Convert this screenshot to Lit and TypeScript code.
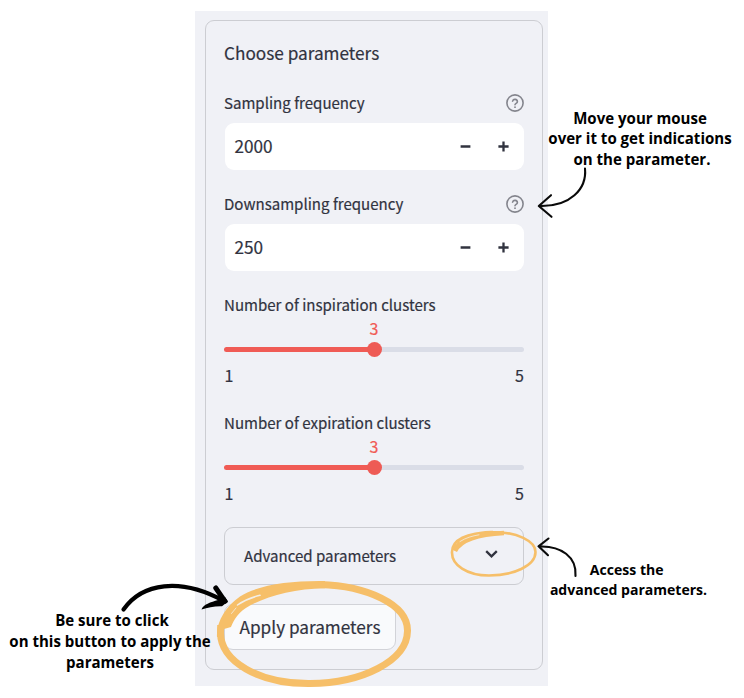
import { LitElement, html, css, svg } from "lit";
import { customElement, property } from "lit/decorators.js";

const uiFont = css`"Noto Sans CJK SC", "Noto Sans CJK JP", sans-serif`;

@customElement("number-field")
class NumberField extends LitElement {
  @property() label = "";
  @property() value = "";

  static styles = css`
    :host { display: block; font-family: ${uiFont}; color: #31333f; -webkit-text-stroke: .2px #31333f; }
    .head { display: flex; align-items: center; justify-content: space-between; height: 20px; }
    .label { font-size: 15.05px; line-height: 20px; white-space: nowrap; }
    .help { display: block; width: 18px; height: 18px; }
    .box {
      display: flex; align-items: center; height: 46.500px; margin: 10px .5px 0;
      background: #fff; border-radius: 9px; padding: 0 14.500px 0 10px; box-sizing: border-box;
    }
    .value { flex: 1; font-size: 17.2px; line-height: 24px; padding-bottom: 1px; }
    .step { display: block; width: 11px; height: 11px; margin-left: 27px; }
  `;

  render() {
    return html`
      <div class="head">
        <span class="label">${this.label}</span>
        <svg class="help" viewBox="0 0 18 18" fill="none" stroke="#84858d" stroke-width="1.6" stroke-linecap="round">
          <circle cx="9" cy="9" r="8.1"></circle>
          <path d="M6.600 7.100a2.450 2.450 0 0 1 4.800 .6c0 1.600-2.300 1.700-2.400 3"></path>
          <path d="M9 13.200h.01" stroke-width="1.800"></path>
        </svg>
      </div>
      <div class="box">
        <span class="value">${this.value}</span>
        <svg class="step" viewBox="0 0 11 11" stroke="#31333f" stroke-width="2.500"><path d="M.6 5.500h9.800"></path></svg>
        <svg class="step" viewBox="0 0 11 11" stroke="#31333f" stroke-width="2.300"><path d="M.4 5.500h10.200M5.500 .4v10.200"></path></svg>
      </div>
    `;
  }
}

@customElement("range-slider")
class RangeSlider extends LitElement {
  @property() label = "";
  @property({ type: Number }) min = 1;
  @property({ type: Number }) max = 5;
  @property({ type: Number }) value = 3;

  static styles = css`
    :host { display: block; font-family: ${uiFont}; color: #31333f; -webkit-text-stroke: .2px; }
    .label { font-size: 15.05px; line-height: 19px; height: 20px; white-space: nowrap; }
    .value { height: 18px; margin-top: 5px; line-height: 17px; font-size: 16px; text-align: center; color: #f05b55; }
    .track { display: flex; align-items: center; height: 18px; margin-top: 3px; }
    .done { height: 5px; border-radius: 3px 0 0 3px; background: #f05b55; }
    .thumb { width: 15px; height: 15px; margin: 0 -7.5px; border-radius: 50%; background: #ee5b55; z-index: 1; }
    .rest { flex: 1; height: 5px; border-radius: 0 3px 3px 0; background: #dadde7; }
    .ends { display: flex; justify-content: space-between; height: 21px; margin-top: 7px; line-height: 18px; padding-left: .5px; font-size: 16px; }
  `;

  render() {
    const part = ((this.value - this.min) / (this.max - this.min)) * 100;
    return html`
      <div class="label">${this.label}</div>
      <div class="value">${this.value}</div>
      <div class="track">
        <div class="done" style="width:${part}%"></div>
        <div class="thumb"></div>
        <div class="rest"></div>
      </div>
      <div class="ends"><span>${this.min}</span><span>${this.max}</span></div>
    `;
  }
}

const marks = svg`
  <g fill="none" stroke="#0a0a0a" stroke-linecap="round" stroke-linejoin="round">
    <path stroke-width="2.1" d="M585 168.500C587 189 570 207 539.500 206M551 195.200L538.800 206L551.500 216.800"></path>
    <path stroke-width="2.1" d="M575.500 576C577 557 561 545.500 539 546.500M548.500 538.500L538.500 546.300L548 555.200"></path>
    <path stroke="#000" stroke-width="4.200" d="M123.500 609.500C142 583 180 577 224 601"></path>
    <path stroke="#000" stroke-width="5" d="M215.800 588L225 601.300"></path>
  </g>
  <path d="M228 601.500L222 606.200C214 606 208 607.500 201.500 609.500C203 604.500 211 602 218 600L225 597Z"></path>
  <g fill="none" stroke="#f6bf69" stroke-linecap="butt">
    <path stroke-width="7" d="M320 584.600C366 586 408 604 407.500 631C407 661 362 683 310 683.500C258 684 221 661 220.500 633L220.700 625"></path>
    <path stroke-width="2.600" d="M454 550C460 537 478 531.500 493 532C517 532 535.500 541 535.500 552C535.500 566 513 575.500 489 575.500C467 575.500 451.500 565 452 552C452 540 466 532.500 493 532"></path>
    <path stroke-width="4.500" d="M455 551C460 541 474 534.500 504 533"></path>
  </g>
  <path fill="#f6bf69" d="M217 637C216 622 226 606 240 596.500C258 585 290 580.500 325 581.100V588.200C295 588.500 268 596 250 605.500C238 612 234 620 231 627L224 629V637Z"></path>
  <g fill="none" stroke="#f3eee6" stroke-linecap="round">
    <path stroke-width="1.500" d="M237.500 605C244 600.500 251 597.500 260 595.300"></path>
    <path stroke-width=".8" d="M231.500 613.500L236 608"></path>
    <path stroke-width=".8" d="M460 541.500C466 537.700 472 536 479 534.800"></path>
  </g>
`;

@customElement("app-root")
class AppRoot extends LitElement {
  static styles = css`
    :host {
      display: block; position: relative; box-sizing: border-box; width: 744px; height: 698px;
      padding: 11px 0 0 195px; background: #fff; overflow: hidden;
      font-family: ${uiFont}; color: #31333f;
    }
    .panel {
      box-sizing: border-box; width: 353px; height: 675px; padding: 9px 5px 0 10px; background: #f0f1f6;
      -webkit-text-stroke: .2px #31333f;
    }
    .card {
      box-sizing: border-box; height: 650px; padding: 20px 18px 0;
      border: 1px solid #cccdd2; border-radius: 9px;
    }
    .title { height: 26px; margin-bottom: 26px; font-size: 17.2px; line-height: 24px; white-space: nowrap; }
    .gap { margin-top: 24.500px; }
    .gap-a { margin-top: 24px; }
    .gap-b { margin-top: 26px; }
    .expander {
      box-sizing: border-box; display: flex; align-items: center; justify-content: space-between;
      height: 58px; margin-top: 22px; padding: 0 25px 0 19px;
      border: 1px solid #cccdd2; border-radius: 9px; font-size: 15.05px;
    }
    .chevron { display: block; width: 13px; height: 8px; margin-top: -4px; }
    .apply {
      box-sizing: border-box; display: block; width: 172px; height: 46px; margin-top: 19px; padding: 0;
      border: 1px solid #d2d3d8; border-radius: 9px; background: #f9fafc;
      font: inherit; color: inherit; font-size: 17.2px; line-height: 43px; white-space: nowrap;
    }
    .marks { position: absolute; left: 0; top: 0; width: 744px; height: 698px; }
    .note {
      position: absolute; color: #000; font-family: "Open Sans", "Noto Sans", sans-serif;
      font-weight: 700; text-align: center; white-space: nowrap;
    }
    .hover { left: 540px; top: 107.500px; width: 200px; font-size: 15.05px; line-height: 20.700px; }
    .access { left: 528.500px; top: 560px; width: 200px; font-size: 14.05px; line-height: 19.500px; }
    .click { left: 0; top: 610px; width: 220px; font-size: 15.05px; line-height: 21px; }
  `;

  render() {
    return html`
      <div class="panel">
        <div class="card">
          <div class="title">Choose parameters</div>
          <number-field label="Sampling frequency" value="2000"></number-field>
          <number-field class="gap" label="Downsampling frequency" value="250"></number-field>
          <range-slider class="gap-a" label="Number of inspiration clusters"></range-slider>
          <range-slider class="gap-b" label="Number of expiration clusters"></range-slider>
          <div class="expander">
            <span>Advanced parameters</span>
            <svg class="chevron" viewBox="0 0 13 8" fill="none" stroke="#31333f" stroke-width="2.300"><path d="M1.200 1.200L6.500 6.300L11.800 1.200"></path></svg>
          </div>
          <button class="apply">Apply parameters</button>
        </div>
      </div>
      <svg class="marks" viewBox="0 0 744 698">${marks}</svg>
      <div class="note hover">Move your mouse<br>over it to get indications<br>&nbsp;on the parameter.</div>
      <div class="note access">Access the&nbsp;<br>advanced parameters.</div>
      <div class="note click">&nbsp;Be sure to click<br>on this button to apply the<br>parameters</div>
    `;
  }
}
